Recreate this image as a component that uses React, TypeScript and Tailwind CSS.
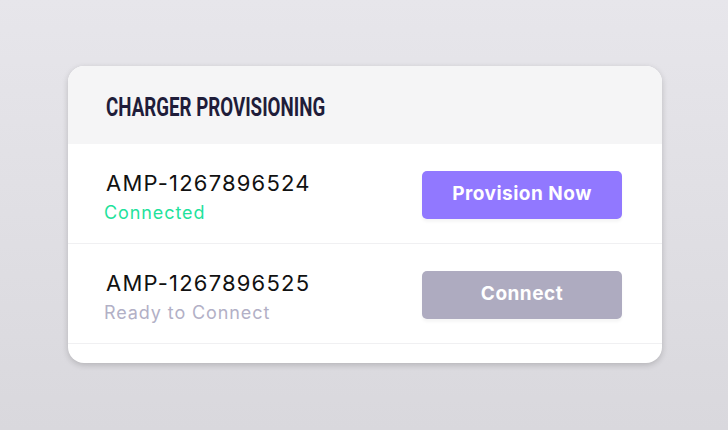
import React from 'react';

const rows = [
  { id: 'AMP-1267896524', status: 'Connected', statusClass: 'text-[#1fe29c]', label: 'Provision Now', btnClass: 'bg-[#9178ff]' },
  { id: 'AMP-1267896525', status: 'Ready to Connect', statusClass: 'text-[#b2b0c6]', label: 'Connect', btnClass: 'bg-[#aeabc0]' },
];

const App: React.FC = () => {
  return (
    <div className="w-[728px] h-[430px] bg-gradient-to-b from-[#e7e6eb] to-[#d9d8dd] pt-[66px] pl-[68px]">
      <div className="w-[594px] h-[297px] bg-white rounded-[16px] overflow-hidden shadow-[0_2px_6px_rgba(0,0,0,0.18)]">
        <div className="h-[78px] bg-[#f5f5f6] flex items-center pl-[38px]">
          <h1 className="inline-block origin-left scale-x-[0.72] text-[#1f1d3a] text-[26px] font-bold pt-[4px] [font-family:'Roboto',sans-serif] whitespace-nowrap">
            CHARGER PROVISIONING
          </h1>
        </div>
        {rows.map((r) => (
          <div key={r.id} className="h-[100px] border-b-[1.5px] border-[#f0f0f2] flex justify-between pl-[38px] pr-[40px]">
            <div className="flex flex-col mt-[25px]">
              <span className="text-[22px] leading-[28px] tracking-[1.2px] text-[#111] [font-family:'Inter',sans-serif]">{r.id}</span>
              <span className={`text-[18px] leading-[24px] mt-[4px] -ml-[2px] tracking-[0.9px] ${r.statusClass} [font-family:'Inter',sans-serif]`}>{r.status}</span>
            </div>
            <button className={`self-center w-[200px] h-[48px] mt-[2px] rounded-[5px] ${r.btnClass} text-white text-[19px] font-bold tracking-[0.5px] shadow-[0_3px_3px_rgba(0,0,0,0.04)] [font-family:'Inter',sans-serif]`}>
              {r.label}
            </button>
          </div>
        ))}
      </div>
    </div>
  );
};

export default App;
